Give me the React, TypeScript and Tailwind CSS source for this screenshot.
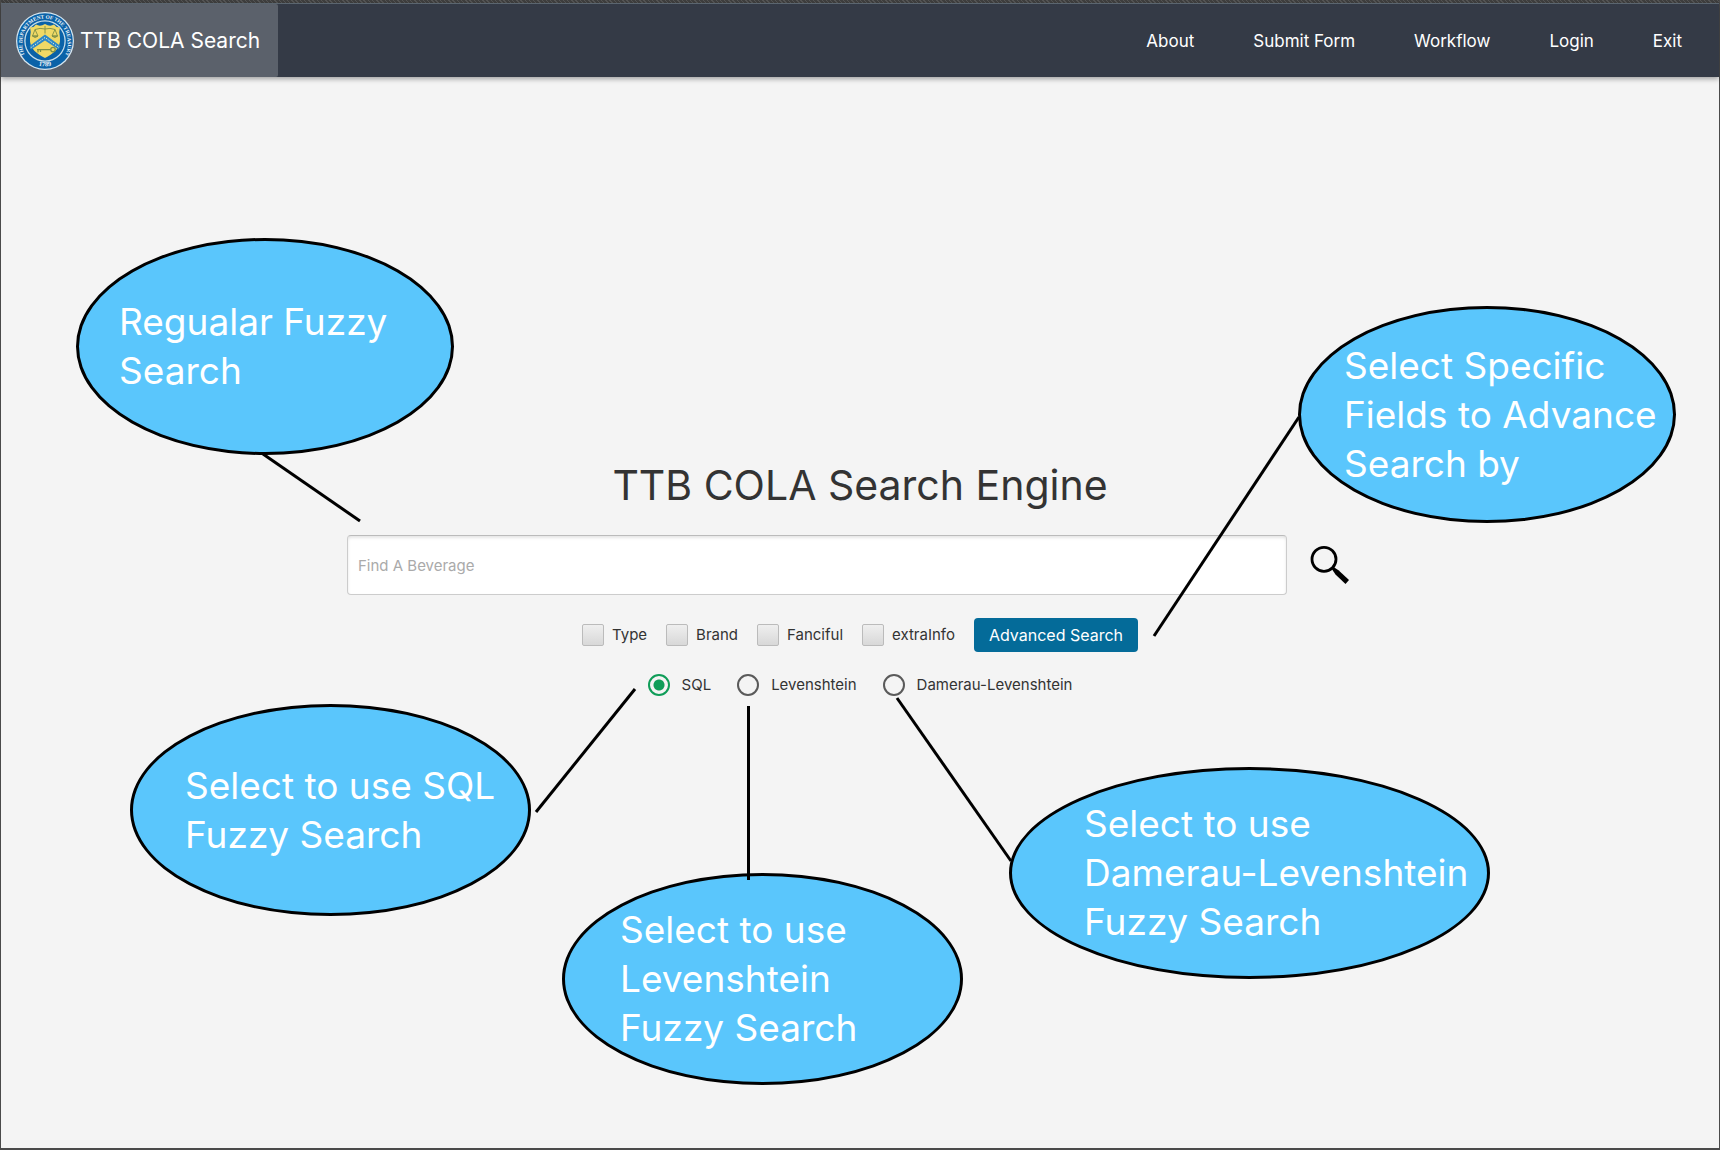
import React from "react";

const NAV = ["About", "Submit Form", "Workflow", "Login", "Exit"];
const FIELDS = ["Type", "Brand", "Fanciful", "extraInfo"];
const ALGORITHMS = ["SQL", "Levenshtein", "Damerau-Levenshtein"];

const CALLOUTS = [
  { box: "left-[76px] top-[161px] w-[378px] h-[217px] pl-10 pb-[2px]", lines: ["Regualar Fuzzy", "Search"] },
  { box: "left-[1298px] top-[229px] w-[378px] h-[217px] pl-[43px]", lines: ["Select Specific", "Fields to Advance", "Search by"] },
  { box: "left-[130px] top-[627px] w-[401px] h-[212px] pl-[52px]", lines: ["Select to use SQL", "Fuzzy Search"] },
  { box: "left-[562px] top-[796px] w-[401px] h-[212px] pl-[55px] pb-[2px]", lines: ["Select to use", "Levenshtein", "Fuzzy Search"] },
  { box: "left-[1009px] top-[690px] w-[481px] h-[212px] pl-[72px] pb-[2px]", lines: ["Select to use", "Damerau-Levenshtein", "Fuzzy Search"] },
];

function Seal() {
  return (
    <svg viewBox="0 0 120 120" className="size-[60px] shrink-0" aria-hidden="true">
      <defs>
        <path id="ring" d="M23 94A50 50 0 0 1 15 60A45 45 0 0 1 105 60A50 50 0 0 1 97 94" />
        <path id="ringBase" d="M38 106A51 51 0 0 0 82 106" />
      </defs>
      <circle cx="60" cy="60" r="58" fill="#d5e6f0" />
      <circle cx="60" cy="60" r="55.500" fill="#0a62a8" />
      <circle cx="60" cy="60" r="41.500" fill="#c9dfea" />
      <circle cx="60" cy="60" r="39" fill="#0a62a8" />
      <text fill="#f2f7fa" fontFamily="Liberation Serif, serif" fontWeight="700" fontSize="10.500">
        <textPath href="#ring" startOffset="50%" textAnchor="middle">THE DEPARTMENT OF THE TREASURY</textPath>
      </text>
      <text fill="#f2f7fa" fontFamily="Liberation Serif, serif" fontWeight="700" fontSize="13">
        <textPath href="#ringBase" startOffset="50%" textAnchor="middle">1789</textPath>
      </text>
      <path d="M30 32Q37 34 42 27Q50 32 60 26Q70 32 78 27Q83 34 90 32Q87 42 90 54C92 76 75 86 60 94C45 86 28 76 30 54Q33 42 30 32Z" fill="#f0d965" />
      <path d="M29 70L60 47L91 70L87 77L60 59L33 77Z" fill="#2c88c8" />
      <path d="M31 74L60 53L89 74" fill="none" stroke="#e9eed0" strokeWidth="2" strokeDasharray="3 2.500" />
      <g fill="none" stroke="#7d8f45" strokeWidth="1.800">
        <path d="M60 30V45M40 37Q50 33 60 36Q70 33 80 37M40 37L35 50H46L40 37M80 37L74 50H85L80 37" />
        <path d="M35 50Q40 56 46 50ZM74 50Q80 56 85 50Z" fill="#9aa055" />
        <path d="M44 77H71M46 77V83M51 77V82" strokeWidth="2.500" />
        <circle cx="76" cy="77" r="4.500" strokeWidth="2.500" />
      </g>
    </svg>
  );
}

function Magnifier() {
  return (
    <svg viewBox="0 0 40 40" className="size-10" aria-hidden="true">
      <circle cx="15" cy="14.300" r="12" fill="none" stroke="#000" strokeWidth="2.800" />
      <path d="M24.500 22L29.500 25.300L40 35L36.500 39L26.500 29.500L22.800 24Z" fill="#000" />
    </svg>
  );
}

function Annotations() {
  return (
    <div className="pointer-events-none absolute top-0 left-1/2 h-[1070px] w-[1720px] -translate-x-1/2">
      {CALLOUTS.map((c) => (
        <div
          key={c.lines.join(" ")}
          className={`${c.box} absolute flex flex-col justify-center rounded-[50%] border-3 border-black bg-[#5ac6fc] text-[37px] leading-[49px] whitespace-nowrap text-white`}
        >
          {c.lines.map((line) => (
            <span key={line}>{line}</span>
          ))}
        </div>
      ))}
      <svg viewBox="0 0 1720 1070" className="absolute inset-0 size-full" aria-hidden="true">
        <g stroke="#000" strokeWidth="3">
          <path d="M263 377L360 444" />
          <path d="M1299 340L1154 559" />
          <path d="M536 735L635 612" />
          <path d="M748.500 629V803" />
          <path d="M897 621L1011 784" />
        </g>
      </svg>
    </div>
  );
}

export default function App() {
  return (
    <div className="flex min-h-screen flex-col border-x border-b-2 border-[#4a4a4a] bg-[#f4f4f4] font-[Inter,sans-serif] text-[#333]">
      <div className="h-[3px] bg-[#4a4a4a] bg-[repeating-linear-gradient(45deg,#555_0_1px,#3f3f3f_1px_3px)]" />
      <header className="relative z-10 flex h-[74px] items-center justify-between border-t border-[#5b6670] bg-[#343a46] pr-[37px] text-white shadow-[0_2px_5px_rgba(0,0,0,0.35)]">
        <a href="#home" className="flex h-full items-center gap-[5px] rounded-r-xs bg-[#5b616b] pr-[18px] pl-[14px] text-[21px]">
          <Seal />
          TTB COLA Search
        </a>
        <nav className="flex gap-[59px]">
          {NAV.map((item) => (
            <a key={item} href="#" className="text-[17px] leading-6">
              {item}
            </a>
          ))}
        </nav>
      </header>

      <main className="relative flex flex-1 flex-col items-center overflow-hidden pt-[378px]">
        <h1 className="text-[41px] leading-[60px]">TTB COLA Search Engine</h1>
        <form className="mt-5 flex w-full flex-col items-center" onSubmit={(e) => e.preventDefault()}>
          <div className="flex w-full max-w-[1026px] items-center gap-[22px]">
            <input
              type="text"
              aria-label="Find A Beverage"
              placeholder="Find A Beverage"
              className="h-[60px] min-w-0 flex-1 rounded-sm border border-[#ccc] border-t-[#bbb] bg-white px-[10px] text-[15px] shadow-[inset_0_2px_3px_rgba(0,0,0,0.1)] outline-none placeholder:text-[#aaa]"
            />
            <button type="submit" aria-label="Search" className="flex h-[60px] w-16 items-center">
              <Magnifier />
            </button>
          </div>
          <div className="mt-[23px] flex items-center gap-[19px]">
            {FIELDS.map((f) => (
              <label key={f} className="flex items-center gap-2 text-[15px]">
                <input
                  type="checkbox"
                  className="size-[22px] appearance-none rounded-xs border border-[#bbb] bg-linear-to-b from-[#efefef] to-[#d8d8d8] checked:bg-[#0a6c9b]"
                />
                {f}
              </label>
            ))}
            <button type="button" className="h-[34px] rounded-sm bg-[#046b99] px-[15px] text-base text-white">
              Advanced Search
            </button>
          </div>
          <div className="mt-[22px] flex items-center gap-[26px]">
            {ALGORITHMS.map((a, i) => (
              <label key={a} className="flex items-center gap-3 text-[15px]">
                <input
                  type="radio"
                  name="algorithm"
                  defaultChecked={i === 0}
                  className="size-[22px] appearance-none rounded-full border-2 border-[#5a5a5a] checked:border-[#0f9d58] checked:bg-[radial-gradient(circle,#0f9d58_5px,transparent_6px)]"
                />
                {a}
              </label>
            ))}
          </div>
        </form>
        <Annotations />
      </main>
    </div>
  );
}
